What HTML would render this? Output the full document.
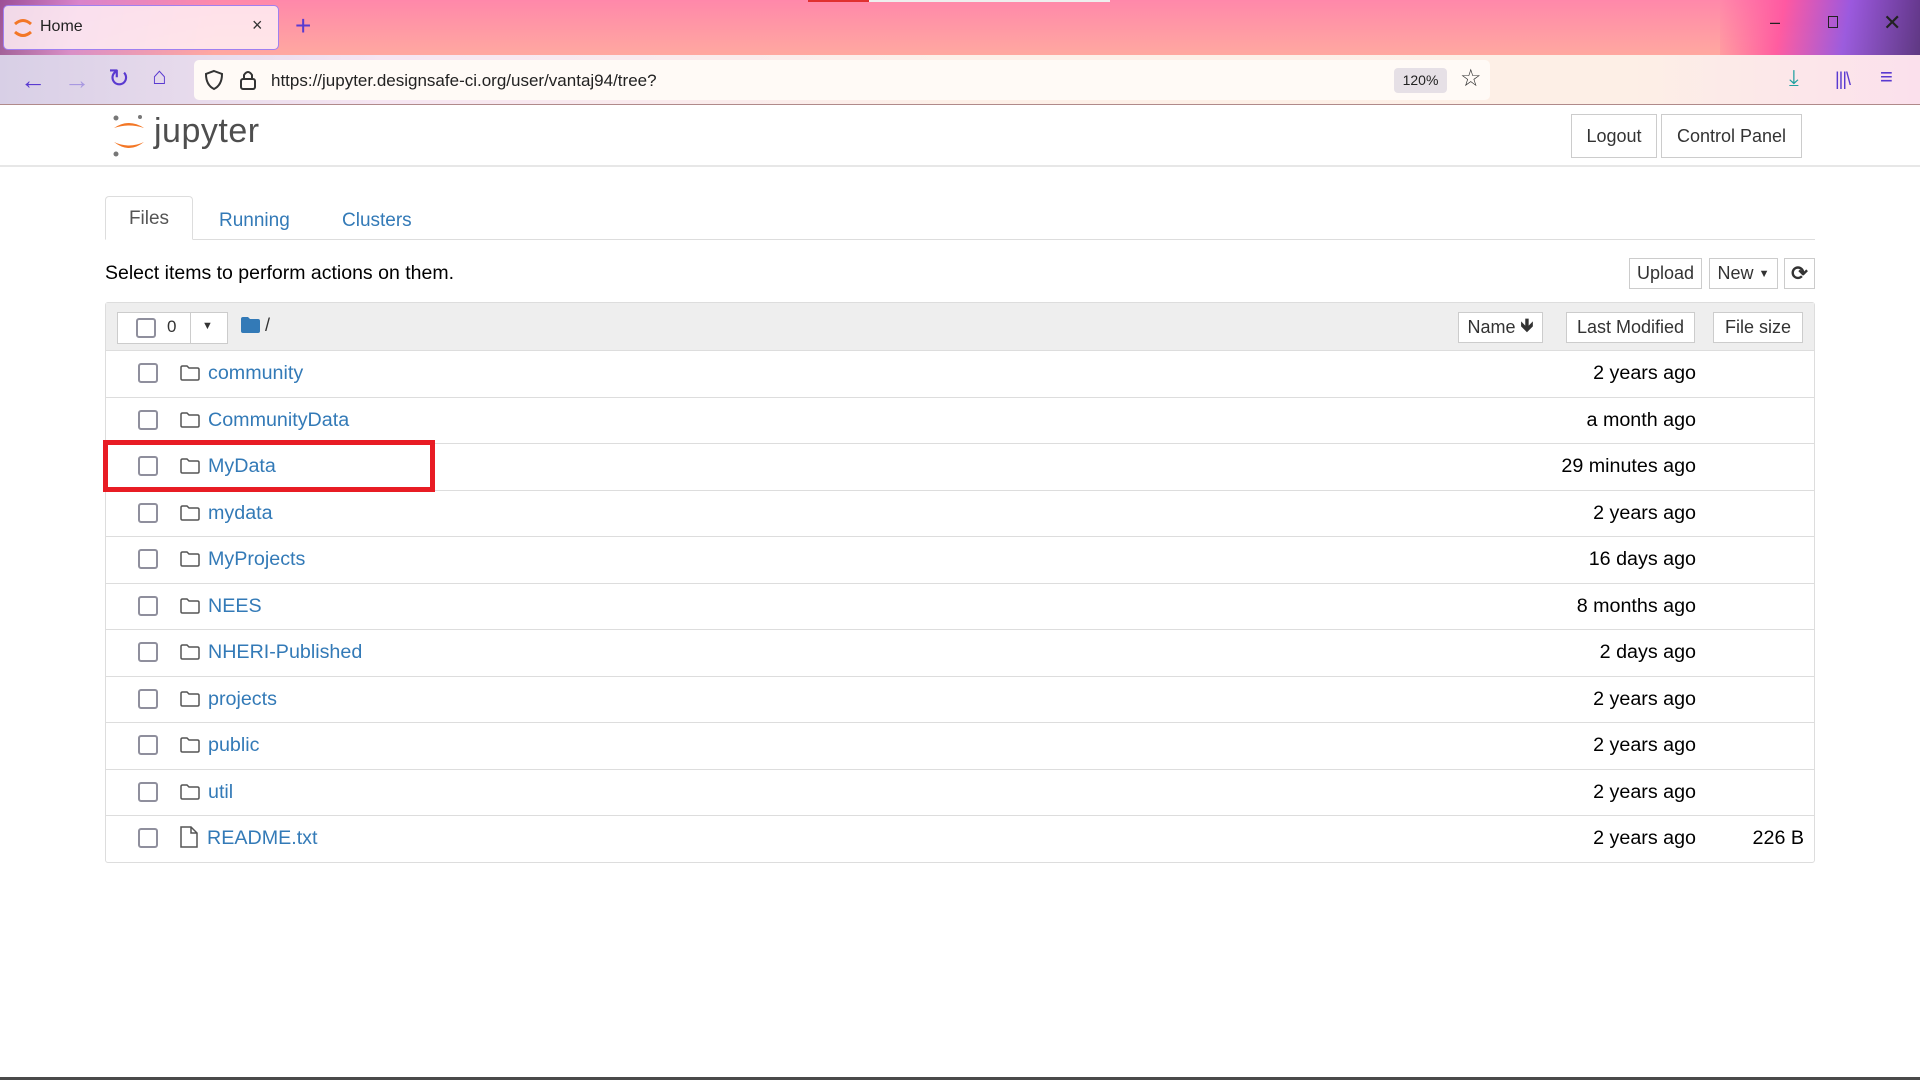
<!DOCTYPE html>
<html><head><meta charset="utf-8"><style>
*{box-sizing:border-box;margin:0;padding:0}
body{width:1920px;height:1080px;overflow:hidden;background:#fff;font-family:"Liberation Sans",Arial,sans-serif;position:relative}
.abs{position:absolute}
#tabbar{left:0;top:0;width:1920px;height:55px;background:linear-gradient(180deg,#ff88aa 0%,#ffa8a0 100%)}
#nav{left:0;top:55px;width:1920px;height:50px;background:linear-gradient(90deg,#d8cfe6 0%,#f6e6f2 20%,#fdf0e8 50%,#fdefe6 85%,#fbe0ec 100%);border-bottom:1px solid #b08a8a}
.cb{position:absolute;width:20px;height:20px;border:2.5px solid #8f8f9d;border-radius:3px;background:#fff}
.btn{position:absolute;border:1px solid #ccc;background:#fff;color:#333;font-size:18px;display:flex;align-items:center;justify-content:center}
.row{position:absolute;left:105px;width:1710px;height:46.5px;border-top:1px solid #ddd}
.row .name{position:absolute;left:103px;top:11px;font-size:19.7px;color:#337ab7}
.row .date{position:absolute;right:119px;top:11px;font-size:19.7px;color:#000}
.row .size{position:absolute;right:11px;top:11px;font-size:19.7px;color:#000}
.row .cb{left:33px;top:12px}
.row svg{position:absolute;left:75px;top:14px}
</style></head><body>
<div id="tabbar" class="abs"></div>
<div class="abs" style="left:0;top:0;width:300px;height:105px;background:linear-gradient(100deg,#5a2a8a 0%,#c080e0 25%,rgba(255,180,220,0) 70%);opacity:.6"></div>
<div class="abs" style="left:1720px;top:0;width:200px;height:105px;background:linear-gradient(100deg,rgba(255,90,160,0) 0%,#ff50a0 30%,#8a50e8 60%,#3a2070 100%);opacity:.85"></div>
<div class="abs" style="left:808px;top:0;width:61px;height:2px;background:#e03030"></div>
<div class="abs" style="left:869px;top:0;width:241px;height:2px;background:#eee"></div>
<div class="abs" style="left:3px;top:5px;width:276px;height:45px;background:rgba(255,240,245,.85);border:1px solid #a080f0;border-radius:5px"></div>
<svg class="abs" style="left:13px;top:17px" width="20" height="22" viewBox="0 0 20 22"><path d="M2 7 Q10 0 18 7" stroke="#f37726" stroke-width="3" fill="none"/><path d="M2 15 Q10 22 18 15" stroke="#f37726" stroke-width="3" fill="none"/></svg>
<div class="abs" style="left:40px;top:18px;font-size:16px;color:#222">Home</div>
<div class="abs" style="left:252px;top:15px;font-size:18px;color:#333">×</div>
<div class="abs" style="left:295px;top:10px;font-size:28px;color:#5a3ad0">+</div>
<div class="abs" style="left:1770px;top:12px;font-size:18px;color:#222">–</div>
<div class="abs" style="left:1828px;top:16px;width:10px;height:12px;border:1.5px solid #222"></div>
<div class="abs" style="left:1883px;top:10px;font-size:22px;color:#222">✕</div>
<div id="nav" class="abs"></div>
<div class="abs" style="left:20px;top:65px;font-size:26px;color:#5a3ad0">←</div>
<div class="abs" style="left:64px;top:65px;font-size:26px;color:#a898e0">→</div>
<div class="abs" style="left:108px;top:63px;font-size:26px;color:#5a3ad0">↻</div>
<div class="abs" style="left:152px;top:63px;font-size:24px;color:#5a3ad0">⌂</div>
<div class="abs" style="left:194px;top:60px;width:1296px;height:40px;background:#fffaf6;border-radius:5px"></div>
<svg class="abs" style="left:204px;top:69px" width="20" height="22" viewBox="0 0 20 22"><path d="M10 2 L18 5 Q18 16 10 20 Q2 16 2 5Z" stroke="#333" stroke-width="2" fill="none"/></svg>
<svg class="abs" style="left:239px;top:69px" width="18" height="22" viewBox="0 0 18 22"><path d="M5 10 V6 Q9 0 13 6 V10" stroke="#333" stroke-width="2" fill="none"/><rect x="2" y="10" width="14" height="10" rx="2" stroke="#333" stroke-width="2" fill="none"/></svg>
<div class="abs" style="left:271px;top:71px;font-size:17px;color:#222">https://jupyter.designsafe-ci.org/user/vantaj94/tree?</div>
<div class="abs" style="left:1394px;top:68px;width:53px;height:25px;background:#e6e0e6;border-radius:4px;font-size:14px;color:#222;text-align:center;line-height:25px">120%</div>
<div class="abs" style="left:1460px;top:64px;font-size:24px;color:#333">☆</div>
<div class="abs" style="left:1789px;top:65px;font-size:22px;color:#20a0a0">⤓</div>
<div class="abs" style="left:1835px;top:69px;font-size:18px;color:#5a3ad0;letter-spacing:-1px">|||\</div>
<div class="abs" style="left:1880px;top:64px;font-size:22px;color:#5a3ad0">≡</div>

<svg class="abs" style="left:112px;top:114px" width="34" height="44" viewBox="0 0 34 44"><circle cx="4" cy="4" r="2.5" fill="#777"/><circle cx="28" cy="3" r="2" fill="#777"/><circle cx="4" cy="40" r="2.5" fill="#777"/><path d="M2 14 Q17 4 32 14 Q17 9 2 14Z" fill="#f37726"/><path d="M2 28 Q17 40 32 28 Q17 35 2 28Z" fill="#f37726"/></svg>
<div class="abs" style="left:154px;top:112px;font-size:34px;color:#4e4e4e;letter-spacing:0.5px">jupyter</div>
<div class="btn" style="left:1571px;top:114px;width:86px;height:44px">Logout</div>
<div class="btn" style="left:1661px;top:114px;width:141px;height:44px">Control Panel</div>
<div class="abs" style="left:0;top:165px;width:1920px;height:2px;background:#e7e7e7"></div>

<div class="abs" style="left:105px;top:239px;width:1710px;height:1px;background:#ddd"></div>
<div class="abs" style="left:105px;top:196px;width:88px;height:44px;border:1px solid #ddd;border-bottom-color:#fff;background:#fff;border-radius:4px 4px 0 0;font-size:19px;color:#555;text-align:center;line-height:44px">Files</div>
<div class="abs" style="left:219px;top:210px;font-size:19px;color:#337ab7">Running</div>
<div class="abs" style="left:342px;top:210px;font-size:19px;color:#337ab7">Clusters</div>

<div class="abs" style="left:105px;top:262px;font-size:19.5px;color:#000">Select items to perform actions on them.</div>
<div class="btn" style="left:1629px;top:258px;width:73px;height:31px">Upload</div>
<div class="btn" style="left:1709px;top:258px;width:69px;height:31px">New&nbsp;<span style="font-size:11px">▼</span></div>
<div class="btn" style="left:1784px;top:258px;width:31px;height:31px;font-size:20px;font-weight:bold">⟳</div>

<div class="abs" style="left:105px;top:302px;width:1710px;height:561px;border:1px solid #ddd;border-radius:3px"></div>
<div class="abs" style="left:106px;top:303px;width:1708px;height:47px;background:#eee"></div>
<div class="abs" style="left:117px;top:312px;width:111px;height:32px;border:1px solid #ccc;background:#fff"></div>
<div class="abs" style="left:190px;top:312px;width:1px;height:32px;background:#ccc"></div>
<div class="cb" style="left:136px;top:318px"></div>
<div class="abs" style="left:167px;top:317px;font-size:17px;color:#333">0</div>
<div class="abs" style="left:202px;top:320px;font-size:11px;color:#333">▼</div>
<svg class="abs" style="left:241px;top:317px" width="19" height="16" viewBox="0 0 19 16"><path d="M0 2 Q0 0 2 0 H7 L9 2 H17 Q19 2 19 4 V14 Q19 16 17 16 H2 Q0 16 0 14Z" fill="#337ab7"/></svg>
<div class="abs" style="left:265px;top:315px;font-size:18px;color:#333">/</div>
<div class="btn" style="left:1458px;top:312px;width:85px;height:31px">Name&nbsp;<b>🡻</b></div>
<div class="btn" style="left:1566px;top:312px;width:129px;height:31px">Last Modified</div>
<div class="btn" style="left:1713px;top:312px;width:90px;height:31px">File size</div>

<div class="row" style="top:350px"><div class="cb"></div><svg width="20" height="16" viewBox="0 0 20 16"><path d="M1 2.5 Q1 1 2.5 1 H7 L9 3 H17.5 Q19 3 19 4.5 V13.5 Q19 15 17.5 15 H2.5 Q1 15 1 13.5Z" stroke="#555" stroke-width="1.5" fill="none"/></svg><span class="name">community</span><span class="date">2 years ago</span></div>
<div class="row" style="top:396.5px"><div class="cb"></div><svg width="20" height="16" viewBox="0 0 20 16"><path d="M1 2.5 Q1 1 2.5 1 H7 L9 3 H17.5 Q19 3 19 4.5 V13.5 Q19 15 17.5 15 H2.5 Q1 15 1 13.5Z" stroke="#555" stroke-width="1.5" fill="none"/></svg><span class="name">CommunityData</span><span class="date">a month ago</span></div>
<div class="row" style="top:443px"><div class="cb"></div><svg width="20" height="16" viewBox="0 0 20 16"><path d="M1 2.5 Q1 1 2.5 1 H7 L9 3 H17.5 Q19 3 19 4.5 V13.5 Q19 15 17.5 15 H2.5 Q1 15 1 13.5Z" stroke="#555" stroke-width="1.5" fill="none"/></svg><span class="name">MyData</span><span class="date">29 minutes ago</span></div>
<div class="row" style="top:489.5px"><div class="cb"></div><svg width="20" height="16" viewBox="0 0 20 16"><path d="M1 2.5 Q1 1 2.5 1 H7 L9 3 H17.5 Q19 3 19 4.5 V13.5 Q19 15 17.5 15 H2.5 Q1 15 1 13.5Z" stroke="#555" stroke-width="1.5" fill="none"/></svg><span class="name">mydata</span><span class="date">2 years ago</span></div>
<div class="row" style="top:536px"><div class="cb"></div><svg width="20" height="16" viewBox="0 0 20 16"><path d="M1 2.5 Q1 1 2.5 1 H7 L9 3 H17.5 Q19 3 19 4.5 V13.5 Q19 15 17.5 15 H2.5 Q1 15 1 13.5Z" stroke="#555" stroke-width="1.5" fill="none"/></svg><span class="name">MyProjects</span><span class="date">16 days ago</span></div>
<div class="row" style="top:582.5px"><div class="cb"></div><svg width="20" height="16" viewBox="0 0 20 16"><path d="M1 2.5 Q1 1 2.5 1 H7 L9 3 H17.5 Q19 3 19 4.5 V13.5 Q19 15 17.5 15 H2.5 Q1 15 1 13.5Z" stroke="#555" stroke-width="1.5" fill="none"/></svg><span class="name">NEES</span><span class="date">8 months ago</span></div>
<div class="row" style="top:629px"><div class="cb"></div><svg width="20" height="16" viewBox="0 0 20 16"><path d="M1 2.5 Q1 1 2.5 1 H7 L9 3 H17.5 Q19 3 19 4.5 V13.5 Q19 15 17.5 15 H2.5 Q1 15 1 13.5Z" stroke="#555" stroke-width="1.5" fill="none"/></svg><span class="name">NHERI-Published</span><span class="date">2 days ago</span></div>
<div class="row" style="top:675.5px"><div class="cb"></div><svg width="20" height="16" viewBox="0 0 20 16"><path d="M1 2.5 Q1 1 2.5 1 H7 L9 3 H17.5 Q19 3 19 4.5 V13.5 Q19 15 17.5 15 H2.5 Q1 15 1 13.5Z" stroke="#555" stroke-width="1.5" fill="none"/></svg><span class="name">projects</span><span class="date">2 years ago</span></div>
<div class="row" style="top:722px"><div class="cb"></div><svg width="20" height="16" viewBox="0 0 20 16"><path d="M1 2.5 Q1 1 2.5 1 H7 L9 3 H17.5 Q19 3 19 4.5 V13.5 Q19 15 17.5 15 H2.5 Q1 15 1 13.5Z" stroke="#555" stroke-width="1.5" fill="none"/></svg><span class="name">public</span><span class="date">2 years ago</span></div>
<div class="row" style="top:768.5px"><div class="cb"></div><svg width="20" height="16" viewBox="0 0 20 16"><path d="M1 2.5 Q1 1 2.5 1 H7 L9 3 H17.5 Q19 3 19 4.5 V13.5 Q19 15 17.5 15 H2.5 Q1 15 1 13.5Z" stroke="#555" stroke-width="1.5" fill="none"/></svg><span class="name">util</span><span class="date">2 years ago</span></div>
<div class="row" style="top:815px"><div class="cb"></div><svg style="top:10px" width="18" height="22" viewBox="0 0 18 22"><path d="M1 1 H11 L17 7 V21 H1Z M11 1 V7 H17" stroke="#555" stroke-width="1.5" fill="none"/></svg><span class="name" style="left:102px">README.txt</span><span class="date">2 years ago</span><span class="size">226 B</span></div>

<div class="abs" style="left:103px;top:440px;width:332px;height:52px;border:5px solid #e81c24"></div>
<div class="abs" style="left:0;top:1077px;width:1920px;height:3px;background:#4a4a4a"></div>
</body></html>
